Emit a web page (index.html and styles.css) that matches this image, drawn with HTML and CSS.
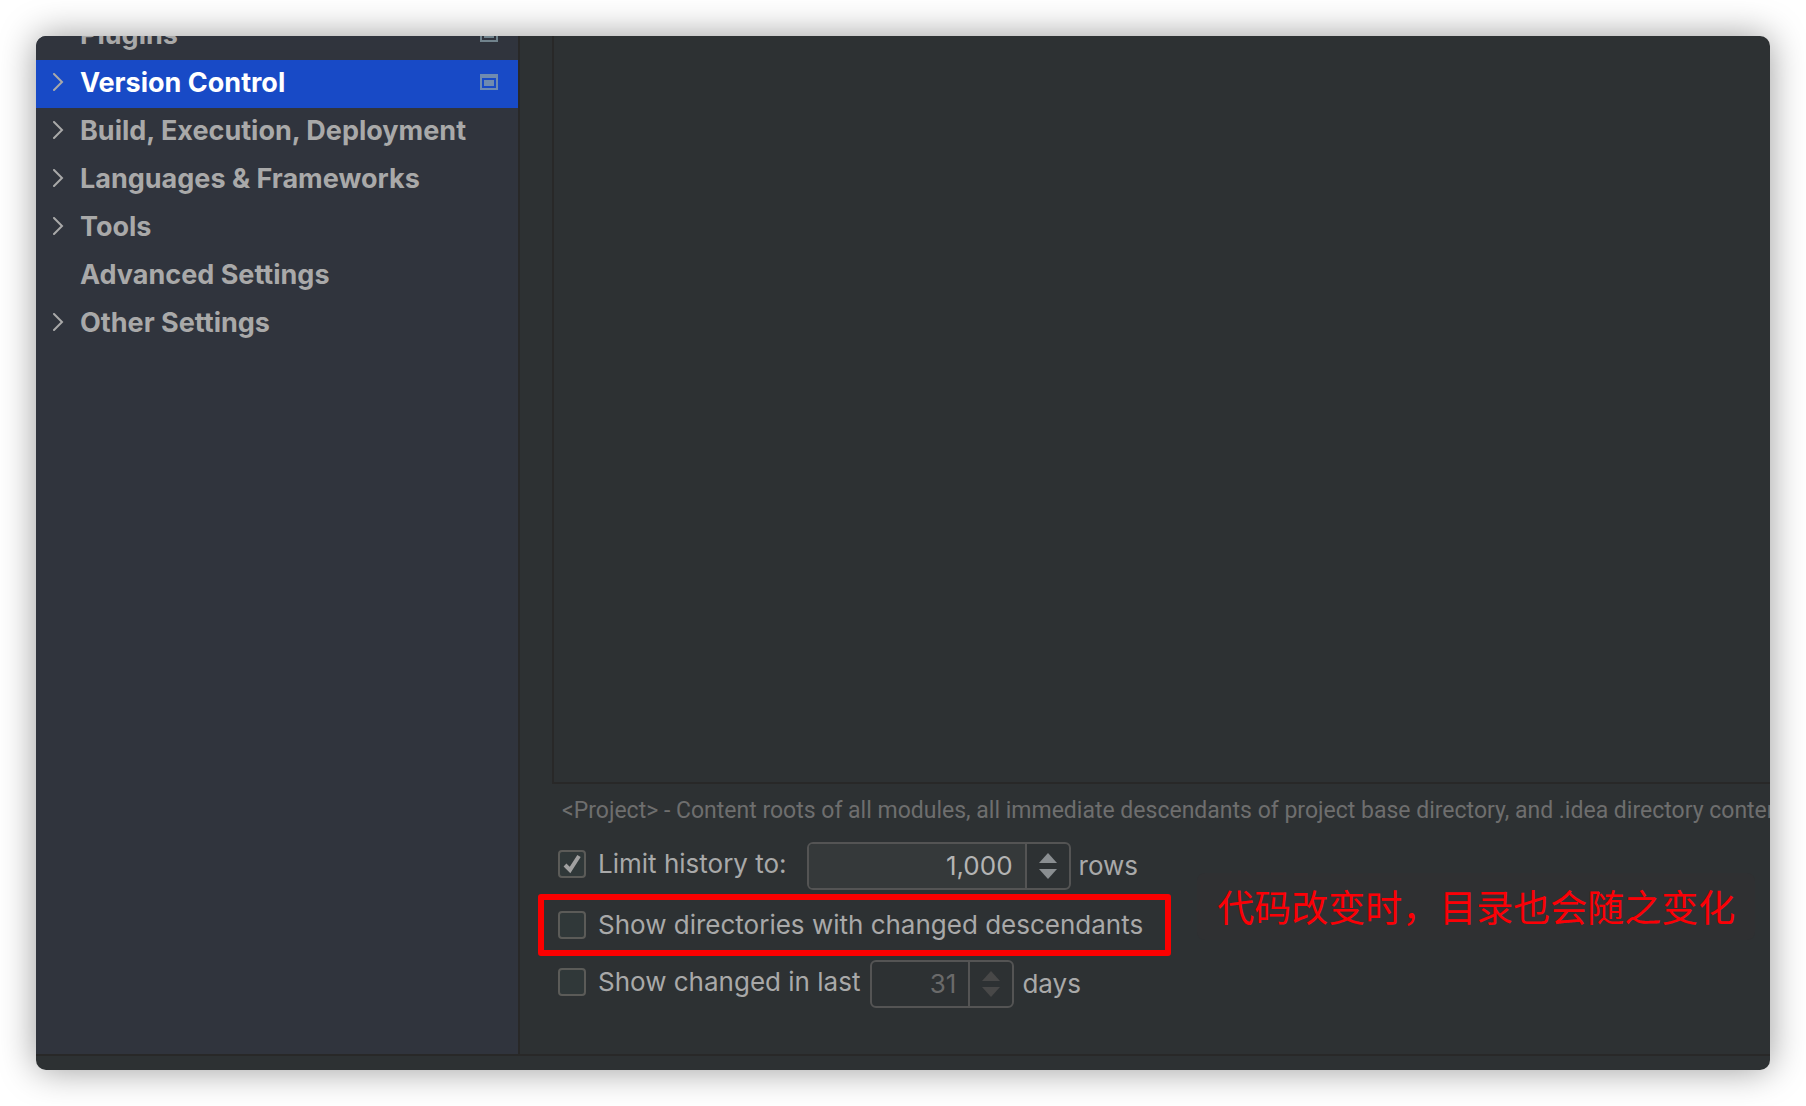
FILE: index.html
```html
<!DOCTYPE html>
<html lang="en">
<head>
<meta charset="utf-8">
<title>Settings</title>
<link rel="stylesheet" href="styles.css">
</head>
<body>
<div class="window">
  <div class="body">
    <nav class="sidebar" aria-label="Settings categories">
      <ul class="tree">
        <li><a class="item" href="#plugins"><span class="arrow"></span><span class="name">Plugins</span><svg class="scope" viewBox="0 0 18 16"><path fill-rule="evenodd" d="M0 0h18v16H0zM2 4v10h14V4z"/><path d="M4 6h10v6H4z"/></svg></a></li>
        <li><a class="item selected" href="#vcs" aria-current="page"><svg class="arrow" viewBox="0 0 12 18"><path d="M2 1l8 8-8 8"/></svg><span class="name">Version Control</span><svg class="scope" viewBox="0 0 18 16"><path fill-rule="evenodd" d="M0 0h18v16H0zM2 4v10h14V4z"/><path d="M4 6h10v6H4z"/></svg></a></li>
        <li><a class="item" href="#build"><svg class="arrow" viewBox="0 0 12 18"><path d="M2 1l8 8-8 8"/></svg><span class="name">Build, Execution, Deployment</span></a></li>
        <li><a class="item" href="#languages"><svg class="arrow" viewBox="0 0 12 18"><path d="M2 1l8 8-8 8"/></svg><span class="name">Languages &amp; Frameworks</span></a></li>
        <li><a class="item" href="#tools"><svg class="arrow" viewBox="0 0 12 18"><path d="M2 1l8 8-8 8"/></svg><span class="name">Tools</span></a></li>
        <li><a class="item" href="#advanced"><span class="arrow"></span><span class="name">Advanced Settings</span></a></li>
        <li><a class="item" href="#other"><svg class="arrow" viewBox="0 0 12 18"><path d="M2 1l8 8-8 8"/></svg><span class="name">Other Settings</span></a></li>
      </ul>
    </nav>
    <main class="content">
      <div class="mappings"></div>
      <p class="note">&lt;Project&gt; - Content roots of all modules, all immediate descendants of project base directory, and .idea directory contents</p>
      <div class="lower">
        <form class="options">
          <div class="row">
            <label class="option"><span class="check"><input type="checkbox" checked><svg viewBox="0 0 28 28"><path d="M7 15l5 5 9-14"/></svg></span>Limit history to:</label>
            <span class="spinner">
              <input type="text" value="1,000" aria-label="Rows of history">
              <span class="steps">
                <button type="button" aria-label="More rows"><svg viewBox="0 0 18 10"><path d="M9 0l9 10H0z"/></svg></button>
                <button type="button" aria-label="Fewer rows"><svg viewBox="0 0 18 10"><path d="M0 0h18L9 10z"/></svg></button>
              </span>
            </span>
            <span class="unit">rows</span>
          </div>
          <div class="row marked">
            <label class="option"><span class="check"><input type="checkbox"></span>Show directories with changed descendants</label>
          </div>
          <div class="row">
            <label class="option"><span class="check"><input type="checkbox"></span>Show changed in last</label>
            <span class="spinner short">
              <input type="text" value="31" aria-label="Number of days" disabled>
              <span class="steps">
                <button type="button" aria-label="More days" disabled><svg viewBox="0 0 18 10"><path d="M9 0l9 10H0z"/></svg></button>
                <button type="button" aria-label="Fewer days" disabled><svg viewBox="0 0 18 10"><path d="M0 0h18L9 10z"/></svg></button>
              </span>
            </span>
            <span class="unit">days</span>
          </div>
        </form>
        <p class="remark" lang="zh-CN">代码改变时，目录也会随之变化</p>
      </div>
    </main>
  </div>
  <footer class="footer"></footer>
</div>
</body>
</html>
```
FILE: styles.css
```css
* {
  box-sizing: border-box;
}

body {
  margin: 0;
  padding: 36px;
  min-height: 100vh;
  display: flex;
  background: #fff;
  color: #a9a9a9;
  font-family: Inter, "Noto Sans CJK SC", sans-serif;
  font-size: 26px;
  line-height: 30px;
}

.window {
  flex: 1;
  min-width: 0;
  display: flex;
  flex-direction: column;
  overflow: hidden;
  border-radius: 10px;
  background: #2d3133;
  box-shadow: 0 0 36px rgba(0, 0, 0, 0.4);
}

.body {
  flex: 1;
  display: flex;
}

.sidebar {
  flex: 0 0 484px;
  border-right: 2px solid #282828;
  background: #30343d;
}

.tree {
  margin: -24px 0 0;
  padding: 0;
  list-style: none;
}

.item {
  display: flex;
  align-items: center;
  height: 48px;
  padding: 0 20px 4px 16px;
  color: inherit;
  font-size: 27px;
  font-weight: 700;
  text-decoration: none;
}

.item.selected {
  background: #184ac6;
  color: #fff;
}

.arrow {
  width: 12px;
  height: 18px;
  margin-right: 16px;
  fill: none;
  stroke: #a9a9a9;
  stroke-width: 2;
  stroke-linecap: round;
}

.name {
  flex: 1;
  padding-top: 2px;
  white-space: nowrap;
}

.scope {
  width: 18px;
  height: 16px;
  fill: #71838d;
}

.selected .scope {
  fill: #6f8bb0;
}

.content {
  flex: 1;
  min-width: 0;
  display: flex;
  flex-direction: column;
}

.mappings {
  flex: 1;
  margin-left: 32px;
  border: solid #282828;
  border-width: 0 0 2px 2px;
}

.note {
  margin: 12px 0 16px;
  padding-left: 42px;
  overflow: hidden;
  color: #6e6e6e;
  font-family: Roboto, sans-serif;
  font-size: 23px;
  white-space: nowrap;
}

.lower {
  display: flex;
  align-items: flex-start;
  gap: 26px;
  padding: 0 15px 46px 18px;
}

.options {
  display: flex;
  flex-direction: column;
  align-items: flex-start;
  gap: 4px;
}

.row {
  display: flex;
  align-items: center;
  height: 48px;
  padding-left: 20px;
  white-space: nowrap;
}

.option {
  display: flex;
  align-items: center;
  gap: 12px;
  padding-bottom: 4px;
}

.marked {
  height: 62px;
  padding: 0 22px 0 14px;
  border: 6px solid #fb0000;
  border-radius: 3px;
}

.marked .option {
  padding-bottom: 0;
}

.check {
  display: grid;
}

.check input,
.check svg {
  grid-area: 1 / 1;
  width: 28px;
  height: 28px;
  margin: 0;
}

.check input {
  appearance: none;
  border: 2px solid #5b5b58;
  border-radius: 4px;
  background: #303839;
}

.check svg {
  pointer-events: none;
  fill: none;
  stroke: #a0a0a0;
  stroke-width: 4;
}

.spinner {
  display: flex;
  width: 264px;
  height: 48px;
  margin: 0 8px 0 20px;
  overflow: hidden;
  border: 2px solid #545454;
  border-radius: 6px;
}

.spinner.short {
  width: 144px;
  margin-left: 10px;
}

.spinner input {
  flex: 1;
  min-width: 0;
  padding: 0 12px;
  border: 0;
  background: #35393a;
  color: #b4b4b4;
  font: inherit;
  text-align: right;
}

.spinner input:disabled {
  background: transparent;
  color: #6a6a6a;
}

.steps {
  width: 44px;
  display: flex;
  flex-direction: column;
  align-items: center;
  justify-content: center;
  gap: 6px;
  border-left: 2px solid #545454;
}

.steps button {
  display: flex;
  padding: 0;
  border: 0;
  background: none;
  fill: #8a8e91;
}

.steps button:disabled {
  fill: #484848;
}

.steps svg {
  width: 18px;
  height: 10px;
}

.remark {
  margin: 31px 0 0;
  padding: 14px 20px;
  border-radius: 8px;
  background: #2f3032;
  color: #fb0006;
  font-family: "Noto Sans CJK SC", sans-serif;
  font-size: 37px;
  line-height: 39px;
  white-space: nowrap;
}

.footer {
  height: 16px;
  border-top: 2px solid #282828;
}
```
